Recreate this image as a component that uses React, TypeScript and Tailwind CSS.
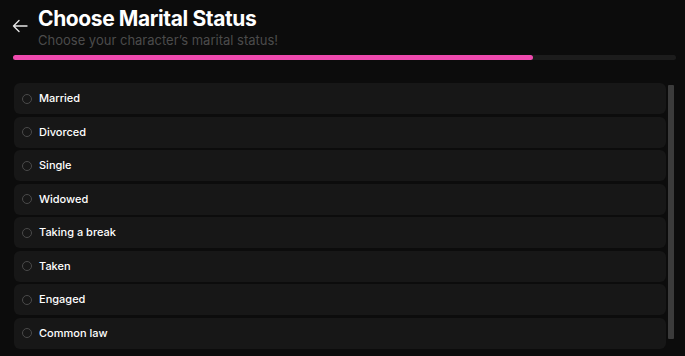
import React from "react";

const items = [
  "Married",
  "Divorced",
  "Single",
  "Widowed",
  "Taking a break",
  "Taken",
  "Engaged",
  "Common law",
];

export default function App() {
  return (
    <div
      className="w-[685px] h-[356px] overflow-hidden bg-[#0c0c0c] text-white"
      style={{ fontFamily: "Inter, 'Noto Sans', sans-serif" }}
    >
      <div className="flex items-start pl-[12px] pt-[6px]">
        <div className="w-[26px] pt-[13px]">
          <svg width="16" height="14" viewBox="0 0 16 14" fill="none" stroke="#e5e5e5" strokeWidth="1.4" strokeLinecap="round" strokeLinejoin="round">
            <path d="M15 7H1.5M7 1.5L1.5 7L7 12.5" />
          </svg>
        </div>
        <div className="flex flex-col">
          <div className="text-[21px] leading-[25px] font-bold tracking-[-0.4px]">Choose Marital Status</div>
          <div className="mt-[1px] text-[13px] leading-[16px] text-[#4b4b4b]">Choose your character’s marital status!</div>
        </div>
      </div>
      <div className="ml-[13px] mt-[7px] w-[663px] h-[5px] rounded-full bg-[#1c1c1c]">
        <div className="h-full w-[520px] rounded-full bg-[#ef4aae]" />
      </div>
      <div className="flex mt-[23px] ml-[14px]">
        <div className="flex flex-col gap-[2.5px] w-[652px]">
          {items.map((it) => (
            <div key={it} className="flex items-center h-[31px] rounded-[6px] bg-[#171717] pl-[8px]">
              <div className="w-[10px] h-[10px] rounded-full border border-[#4a4a4a]" />
              <span className="ml-[7px] text-[11px] font-medium text-white">{it}</span>
            </div>
          ))}
        </div>
        <div className="ml-[1.5px] mt-[2px] w-[6px] h-[254px] bg-[#3b3b3b] rounded-[1px]" />
      </div>
    </div>
  );
}
